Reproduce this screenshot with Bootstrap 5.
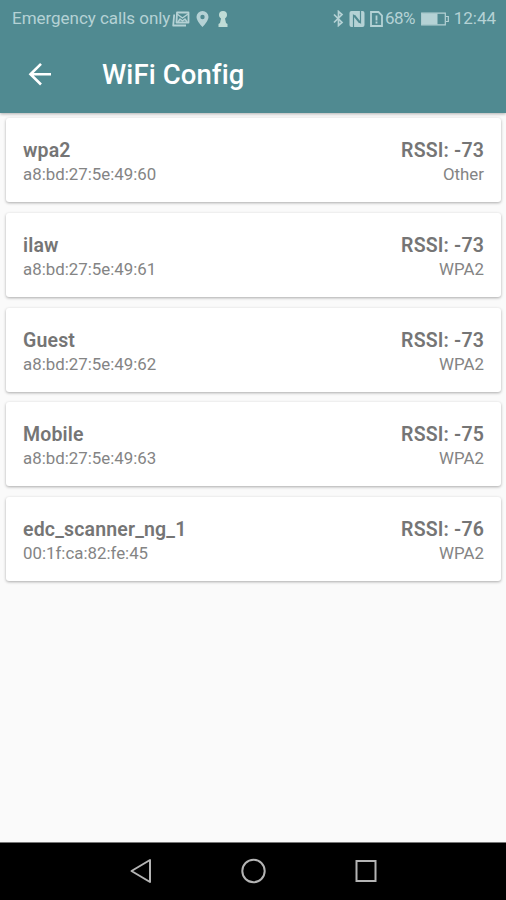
<!DOCTYPE html>
<html lang="en">
<head>
<meta charset="utf-8">
<meta name="viewport" content="width=device-width, initial-scale=1">
<title>WiFi Config</title>
<link rel="stylesheet" href="https://cdn.jsdelivr.net/npm/bootstrap@5.3.0/dist/css/bootstrap.min.css">
<style>
body{font-family:Roboto,"Liberation Sans",sans-serif;background:#fafafa;color:#757575;height:900px;overflow:hidden}
svg{display:block;flex:none}
.app-header{background:#508a91;height:112.500px;box-shadow:0 1px 3px rgba(0,0,0,.3)}
.status-bar{height:37px;padding:0 10px 0 12px;font-size:17px;color:#b5d2d5;white-space:nowrap}
.status-carrier{letter-spacing:-.03px;width:160px}
.status-percent{margin-left:2px;width:36px;font-size:17px;letter-spacing:-.5px}
.status-time{width:47px}
.toolbar{height:75px;padding-left:27px}
.toolbar-title{font-size:27.500px;font-weight:500;color:#fff;line-height:1;margin-left:49px;letter-spacing:.1px}
.network-list{padding:5.500px 5px 0 6px;gap:10.75px}
.network{height:84px;border:0;border-radius:3px;background:#fff;box-shadow:0 1px 3px rgba(0,0,0,.32);padding:20px 17px 0}
.network-name{font-size:19.500px;font-weight:600;line-height:26px;letter-spacing:.17px}
.network-detail{font-size:16.85px;line-height:22px;margin-top:-1px;color:#848484}
.nav-keys{height:58px;background:#000;border-top:1px solid #777}
</style>
</head>
<body class="d-flex flex-column">
<header class="app-header flex-shrink-0">
  <div class="status-bar d-flex align-items-center">
    <span class="status-carrier">Emergency calls only</span>
    <svg width="18" height="16" viewBox="0 0 18 16" fill="none" stroke="#b5d2d5" stroke-linejoin="round"><path d="M5 1.500h11.500v10H4.500zM2.200 3.500L1.200 14.500H14" stroke-width="1.800"/><path d="M5 3l5.500 4L16 3M6 11l2-3 2.500 2L13 8l2 3" stroke-width="1.500"/></svg>
    <svg width="13" height="16" viewBox="0 0 12 16" fill="#b5d2d5" style="margin-left:6px"><path fill-rule="evenodd" d="M6 0a6 6 0 0 0-6 6c0 4 6 10 6 10s6-6 6-10a6 6 0 0 0-6-6zm0 3.800a2.200 2.200 0 1 1 0 4.400 2.200 2.200 0 0 1 0-4.400z"/></svg>
    <svg width="10" height="16" viewBox="0 0 10 16" fill="#c0dcd6" style="margin-left:9px"><path d="M5 0a4 4 0 0 1 4 4c0 1.500-.8 2.800-2 3.500L8 12l1.500 1V16h-9v-3L2 12l1-4.500C1.800 6.800 1 5.500 1 4a4 4 0 0 1 4-4z"/></svg>
    <div class="d-flex align-items-center ms-auto">
      <svg width="11" height="17" viewBox="0 0 11 17" fill="none" stroke="#b5d2d5" stroke-width="1.700"><path d="M1 4.500l8 8L5.500 15.500v-14L9 4.500l-8 8"/></svg>
      <svg width="16" height="16" viewBox="0 0 16 16" style="margin-left:5px"><rect x=".5" width="15" height="16" rx="2" fill="#b5d2d5"/><path d="M4.500 16V4.500l6 7.500M11.500 0v11.500l-6-7.500" fill="none" stroke="#508a91" stroke-width="1.200"/></svg>
      <svg width="13" height="16" viewBox="0 0 13 16" fill="none" stroke="#b5d2d5" stroke-width="1.800" style="margin-left:5px"><path d="M1 1h7.500L12 4.500V15H1zM6.500 4.500v5M6.500 10.500v2"/></svg>
      <span class="status-percent">68%</span>
      <svg width="28" height="14" viewBox="0 0 28 14"><path d="M.7 1.200h23.600v11.600H.7zM25 4.500h2.300v5H25" fill="none" stroke="#b5d2d5" stroke-width="1.200"/><path d="M1 1.500h15.500v11H1z" fill="#b5d2d5"/></svg>
      <span class="status-time text-end">12:44</span>
    </div>
  </div>
  <div class="toolbar d-flex align-items-center">
    <svg width="26" height="26" viewBox="0 0 26 26" fill="none" stroke="#fff" stroke-width="2.600"><path d="M24 12.200H3.500M14 1.900L3.500 12.200 14 22.500"/></svg>
    <h1 class="toolbar-title mb-0">WiFi Config</h1>
  </div>
</header>
<main class="network-list d-flex flex-column flex-grow-1">
  <div class="card network"><div class="d-flex justify-content-between"><div><div class="network-name">wpa2</div><div class="network-detail">a8:bd:27:5e:49:60</div></div><div class="text-end"><div class="network-name">RSSI: -73</div><div class="network-detail">Other</div></div></div></div>
  <div class="card network"><div class="d-flex justify-content-between"><div><div class="network-name">ilaw</div><div class="network-detail">a8:bd:27:5e:49:61</div></div><div class="text-end"><div class="network-name">RSSI: -73</div><div class="network-detail">WPA2</div></div></div></div>
  <div class="card network"><div class="d-flex justify-content-between"><div><div class="network-name">Guest</div><div class="network-detail">a8:bd:27:5e:49:62</div></div><div class="text-end"><div class="network-name">RSSI: -73</div><div class="network-detail">WPA2</div></div></div></div>
  <div class="card network"><div class="d-flex justify-content-between"><div><div class="network-name">Mobile</div><div class="network-detail">a8:bd:27:5e:49:63</div></div><div class="text-end"><div class="network-name">RSSI: -75</div><div class="network-detail">WPA2</div></div></div></div>
  <div class="card network"><div class="d-flex justify-content-between"><div><div class="network-name">edc_scanner_ng_1</div><div class="network-detail">00:1f:ca:82:fe:45</div></div><div class="text-end"><div class="network-name">RSSI: -76</div><div class="network-detail">WPA2</div></div></div></div>
</main>
<nav class="nav-keys d-flex align-items-center flex-shrink-0" aria-label="System navigation">
  <svg class="w-100" height="30" viewBox="0 0 506 30" fill="none" stroke="#b4b4b4" stroke-width="2"><path d="M150 3v22L131.500 14z" stroke-linejoin="round"/><circle cx="253.500" cy="14" r="11.200"/><path d="M356.500 4h19v20h-19z"/></svg>
</nav>
<script src="https://cdn.jsdelivr.net/npm/bootstrap@5.3.0/dist/js/bootstrap.bundle.min.js"></script>
</body>
</html>
